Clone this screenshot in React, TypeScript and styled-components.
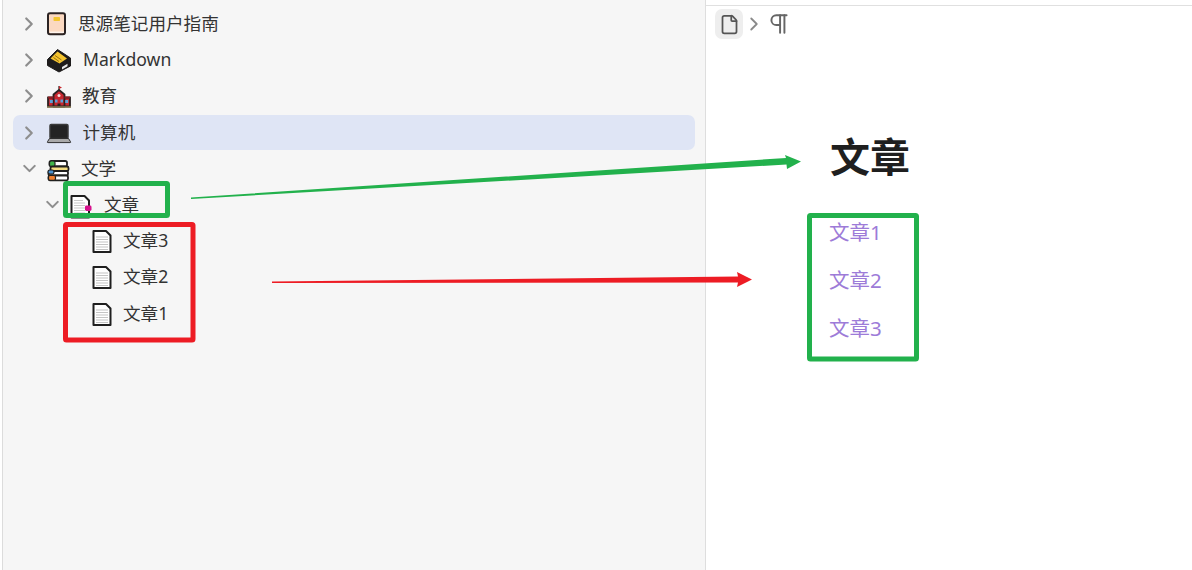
import React from 'react';
import styled, { createGlobalStyle } from 'styled-components';
import { ChevronDown, ChevronRight, File, Pilcrow } from 'lucide-react';

const GlobalStyle = createGlobalStyle`
	html, body {
		margin: 0;
		padding: 0;
		background: #fff;
	}
	body {
		font-family: 'Noto Sans', 'Noto Sans CJK SC', sans-serif;
		color: #2b2b2b;
	}
`;

const Screen = styled.div`
	position: relative;
	display: flex;
	width: 1192px;
	height: 570px;
	overflow: hidden;
`;

const Sidebar = styled.aside`
	box-sizing: border-box;
	width: 704px;
	height: 100%;
	padding: 6.5px 10px 0 10px;
	background: #f6f6f6;
	border-left: 1px solid #dcdcdc;
	border-right: 1px solid #dedede;
	margin-left: 2px;
	display: flex;
	flex-direction: column;
	gap: 1.2px;
`;

const Row = styled.div<{ $level: number; $active?: boolean }>`
	display: flex;
	align-items: center;
	height: 35px;
	flex: none;
	border-radius: 7px;
	padding-left: ${(p) => 8 + p.$level * 23}px;
	background: ${(p) => (p.$active ? '#dfe5f5' : 'transparent')};
`;

const Toggle = styled.span`
	display: flex;
	align-items: center;
	justify-content: center;
	width: 16px;
	height: 16px;
	flex: none;
	margin-right: 10px;
	color: #8e8e8e;

	svg {
		flex: none;
	}
`;

const IconSlot = styled.span`
	display: flex;
	width: 24px;
	height: 24px;
	flex: none;

	svg {
		display: block;
		overflow: visible;
	}
`;

const Label = styled.span<{ $gap: number }>`
	margin-left: ${(p) => p.$gap}px;
	padding-bottom: 2px;
	font-size: 17.6px;
	line-height: 24px;
	color: #333;
`;

const Main = styled.main`
	flex: 1;
	display: flex;
	flex-direction: column;
	margin-top: 5px;
	padding: 3px 0 0 9px;
	border-top: 1px solid #e0e0e0;
	background: #fff;
`;

const Breadcrumb = styled.nav`
	display: flex;
	align-items: center;
	height: 30px;
	color: #666;

	svg {
		flex: none;
	}
`;

const CrumbButton = styled.span`
	display: flex;
	align-items: center;
	justify-content: center;
	width: 28px;
	height: 30px;
	border-radius: 7px;
	background: #eeeeee;
	color: #555;
`;

const CrumbSep = styled.span`
	display: flex;
	margin-right: 1px;
	color: #8a8a8a;
`;

const Article = styled.article`
	display: flex;
	flex-direction: column;
	padding: 91px 0 0 115px;
`;

const Title = styled.h1`
	margin: 0;
	font-size: 40px;
	line-height: 54px;
	font-weight: 700;
	color: #1f1f1f;
`;

const Links = styled.div`
	display: flex;
	flex-direction: column;
	gap: 18px;
	margin: 32.5px 0 0 -1px;
`;

const DocLink = styled.a`
	font-size: 20.5px;
	line-height: 30px;
	color: #9d7bd8;
`;

const Annotations = styled.svg`
	position: absolute;
	left: 0;
	top: 0;
	pointer-events: none;
`;

const NotebookIcon = () => (
	<svg width="24" height="24" viewBox="0 0 24 24">
		<rect x="1" y="1.2" width="17" height="21" rx="2" fill="#fbd9c1" stroke="#2b2323" strokeWidth="2" />
		<rect x="6.500" y="5" width="6.500" height="4" rx="0.800" fill="#f3c52e" />
		<path d="M3 20.200h14" stroke="#fff" strokeWidth="1" />
	</svg>
);

const BoxIcon = () => (
	<svg width="24" height="24" viewBox="0 0 24 24">
		<path d="M0.500 11.500L10.500 1.500l13 8.500v8L12 24 0.500 17.500z" fill="#1e1c1c" stroke="#1e1c1c" strokeLinejoin="round" />
		<path d="M3.500 10.500L10.500 3.500l9.500 7-7.500 5z" fill="#f4c430" />
		<path d="M8 7.500l6.500 4.500M6.500 9.500l5.500 4" stroke="#9a7010" strokeWidth="1" />
		<path d="M15 19l5.500-3.200v2.400L15 21.400z" fill="#e8e8e8" />
	</svg>
);

const SchoolIcon = () => (
	<svg width="24" height="24" viewBox="0 0 24 24">
		<path d="M12 2v5" stroke="#2a2020" strokeWidth="1.200" />
		<path d="M12 2l3 1.500-3 1.500z" fill="#c9262c" />
		<rect x="1" y="13.500" width="22" height="9" fill="#c9272f" stroke="#2a2020" strokeWidth="1.800" />
		<path d="M6.500 22.500V10.500L12 6l5.500 4.500v12z" fill="#c9272f" stroke="#2a2020" strokeWidth="1.800" strokeLinejoin="round" />
		<path d="M1 13.500h5.500M17.500 13.500H23" stroke="#8c1d22" strokeWidth="2" />
		<rect x="2.800" y="16" width="3" height="3" fill="#5aa1d8" />
		<rect x="18.200" y="16" width="3" height="3" fill="#5aa1d8" />
		<rect x="8" y="15.500" width="2.500" height="3" fill="#5aa1d8" />
		<rect x="13.500" y="15.500" width="2.500" height="3" fill="#5aa1d8" />
		<rect x="10.500" y="19.500" width="3" height="3" fill="#2a2020" />
		<circle cx="12" cy="11.500" r="1.500" fill="#f6dcdc" />
		<path d="M0 23h24" stroke="#8a7a50" strokeWidth="1.500" />
	</svg>
);

const LaptopIcon = () => (
	<svg width="24" height="24" viewBox="0 0 24 24">
		<rect x="3" y="3.500" width="18" height="14" rx="1.200" fill="#232323" stroke="#3a3a3a" strokeWidth="1.500" />
		<path d="M2.500 17.500h19l2 3.200a.6.600 0 0 1-.5.900H1a.6.600 0 0 1-.5-.9z" fill="#a9a9a9" stroke="#2e2e2e" strokeWidth="1" />
	</svg>
);

const BooksIcon = () => (
	<svg width="24" height="24" viewBox="0 0 24 24">
		<rect x="2.500" y="4" width="17.500" height="5.500" rx="1.800" fill="#fff" stroke="#20201f" strokeWidth="1.800" />
		<rect x="2.500" y="4" width="5.500" height="5.500" rx="1.800" fill="#3fb54a" stroke="#20201f" strokeWidth="1.200" />
		<rect x="3.500" y="9.500" width="18" height="4.500" rx="1.500" fill="#f3dc80" stroke="#20201f" strokeWidth="1.800" />
		<rect x="1.500" y="14" width="19.500" height="4.500" rx="1.500" fill="#fff" stroke="#20201f" strokeWidth="1.800" />
		<rect x="1" y="13" width="6" height="4" rx="1.800" fill="#4a90d0" stroke="#20201f" strokeWidth="1.200" />
		<rect x="1.500" y="18.500" width="19.500" height="4.800" rx="1.500" fill="#fff" stroke="#20201f" strokeWidth="1.800" />
		<rect x="1.500" y="18.500" width="7" height="4.800" rx="1.500" fill="#f08030" stroke="#20201f" strokeWidth="1.200" />
	</svg>
);

const DocLines = () => (
	<path d="M3 8h12M3 10.500h12M3 13h12M3 15.500h12M3 18h12M3 20.500h12" stroke="#c4c4c4" strokeWidth="1.200" />
);

const BookmarkDocIcon = () => (
	<svg width="24" height="24" viewBox="0 0 24 24">
		<path d="M1.500 3h13l4.500 4.500v17H1.500z" fill="#fff" stroke="#1f1f1f" strokeWidth="2" strokeLinejoin="round" />
		<path d="M4 7.500h9M4 10h11M4 12.500h11M4 15h11M4 17.500h11M4 20h11" stroke="#c8c8c8" strokeWidth="1.100" />
		<rect x="15" y="12.500" width="6.500" height="5.500" rx="1.400" fill="#d6118c" />
	</svg>
);

const DocIcon = () => (
	<svg width="24" height="24" viewBox="0 0 24 24">
		<path d="M0.500 2h12.500l4.500 4.500v16.500H0.500z" fill="#fff" stroke="#1f1f1f" strokeWidth="2" strokeLinejoin="round" />
		<DocLines />
	</svg>
);

const treeItems = [
	{ label: '思源笔记用户指南', level: 0, toggle: 'closed', gap: 7, icon: <NotebookIcon /> },
	{ label: 'Markdown', level: 0, toggle: 'closed', gap: 12, icon: <BoxIcon /> },
	{ label: '教育', level: 0, toggle: 'closed', gap: 11, icon: <SchoolIcon /> },
	{ label: '计算机', level: 0, toggle: 'closed', gap: 11.5, active: true, icon: <LaptopIcon /> },
	{ label: '文学', level: 0, toggle: 'open', gap: 10, icon: <BooksIcon /> },
	{ label: '文章', level: 1, toggle: 'open', gap: 10, icon: <BookmarkDocIcon /> },
	{ label: '文章3', level: 2, gap: 6, icon: <DocIcon /> },
	{ label: '文章2', level: 2, gap: 6, icon: <DocIcon /> },
	{ label: '文章1', level: 2, gap: 6, icon: <DocIcon /> },
];

const App = () => {
	return (
		<Screen>
			<GlobalStyle />
			<Sidebar>
				{treeItems.map((item) => (
					<Row key={item.label} $level={item.level} $active={item.active}>
						<Toggle>
							{item.toggle === 'closed' && <ChevronRight size={22} strokeWidth={2.4} />}
							{item.toggle === 'open' && <ChevronDown size={21} strokeWidth={2.4} />}
						</Toggle>
						<IconSlot>{item.icon}</IconSlot>
						<Label $gap={item.gap}>{item.label}</Label>
					</Row>
				))}
			</Sidebar>
			<Main>
				<Breadcrumb>
					<CrumbButton>
						<File size={21} strokeWidth={2} />
					</CrumbButton>
					<CrumbSep>
						<ChevronRight size={22} strokeWidth={2} />
					</CrumbSep>
					<Pilcrow size={26} strokeWidth={1.8} />
				</Breadcrumb>
				<Article>
					<Title>文章</Title>
					<Links>
						<DocLink>文章1</DocLink>
						<DocLink>文章2</DocLink>
						<DocLink>文章3</DocLink>
					</Links>
				</Article>
			</Main>
			<Annotations width="1192" height="570" viewBox="0 0 1192 570">
				<rect x="65.500" y="183.500" width="102" height="32" rx="1" fill="none" stroke="#22b14c" strokeWidth="5" />
				<rect x="65.500" y="224.500" width="127.500" height="115.500" rx="1" fill="none" stroke="#ed1c24" strokeWidth="5" />
				<rect x="809.500" y="215.500" width="107" height="143.500" rx="1" fill="none" stroke="#22b14c" strokeWidth="5" />
				<polygon points="191,197.500 786,158 785,155 801,161.500 787,169 786.500,164.500 191,199" fill="#22b14c" />
				<polygon points="272,281.500 738,276.500 737,272 752,279.500 737,287 738,282.500 272,283" fill="#ed1c24" />
			</Annotations>
		</Screen>
	);
};

export default App;
